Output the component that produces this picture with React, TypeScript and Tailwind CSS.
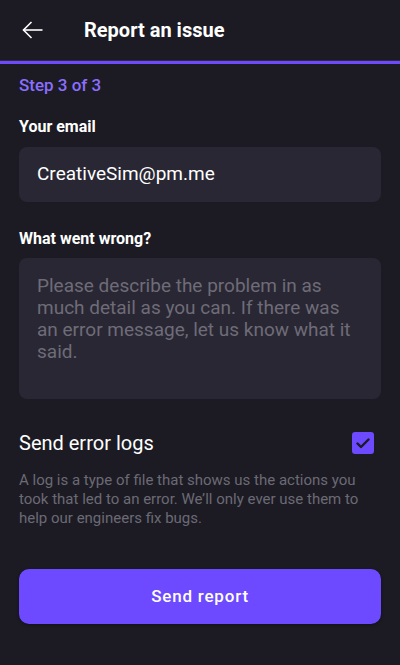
import React from "react";

export default function App() {
  return (
    <div className="w-[400px] h-[665px] bg-[#1c1b23] text-white flex flex-col" style={{ fontFamily: "Roboto, 'Noto Sans', sans-serif" }}>
      <div className="h-[60px] flex items-center">
        <div className="w-[84px] pl-[22px] flex items-center">
          <svg width="21" height="18" viewBox="0 0 21 18" fill="none" stroke="#ffffff" strokeWidth="1.6">
            <path d="M20.5 9H1.5" />
            <path d="M9.5 1L1.5 9L9.5 17" />
          </svg>
        </div>
        <div className="text-[20px] font-bold leading-none">Report an issue</div>
      </div>
      <div className="h-px bg-[#2e2d36]" />
      <div className="h-[3px] bg-[#6d4aff]" />
      <div className="px-[19px] flex flex-col">
        <div className="mt-[12px] h-[20px] flex items-center text-[17px] font-medium text-[#8a6eff]">Step 3 of 3</div>
        <div className="mt-[20px] h-[22px] flex items-center text-[16px] font-bold">Your email</div>
        <div className="mt-[9px] h-[55px] rounded-[8px] bg-[#292733] flex items-center px-[18px] text-[19px] text-white">CreativeSim@pm.me</div>
        <div className="mt-[26px] h-[22px] flex items-center text-[16px] font-bold">What went wrong?</div>
        <div className="mt-[8px] h-[141px] rounded-[8px] bg-[#292733] px-[18px] pt-[17px] text-[19px] leading-[22px] text-[#6e6c78]">
          Please describe the problem in as much detail as you can. If there was an error message, let us know what it said.
        </div>
        <div className="mt-[32px] h-[24px] flex items-center justify-between">
          <div className="text-[20px]">Send error logs</div>
          <div className="w-[22px] h-[22px] mr-[7px] rounded-[3px] bg-[#6d4aff] flex items-center justify-center">
            <svg width="14" height="11" viewBox="0 0 14 11" fill="none" stroke="#1c1b23" strokeWidth="2.4" strokeLinecap="round" strokeLinejoin="round">
              <path d="M1.5 5.5L5 9L12.5 1.5" />
            </svg>
          </div>
        </div>
        <div className="mt-[16px] text-[15px] leading-[19px] text-[#6b6a75]">
          A log is a type of file that shows us the actions you took that led to an error. We’ll only ever use them to help our engineers fix bugs.
        </div>
        <div className="mt-[41px] h-[55px] rounded-[10px] bg-[#6d4aff] flex items-center justify-center text-[17px] font-medium tracking-[0.8px] shadow-[0_1px_3px_rgba(0,0,0,0.4)]">
          Send report
        </div>
      </div>
    </div>
  );
}
